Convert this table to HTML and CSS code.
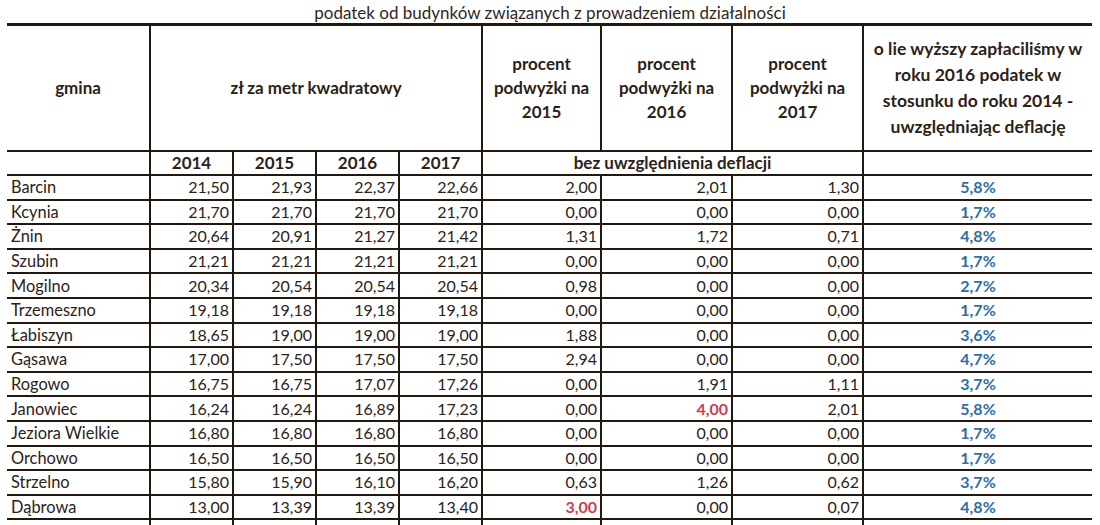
FILE: index.html
```html
<!DOCTYPE html>
<html lang="pl">
<head>
<meta charset="utf-8">
<title>podatek od budynków</title>
<link rel="stylesheet" href="styles.css">
</head>
<body>
<div class="title">podatek od budynków związanych z prowadzeniem działalności</div>
<table class="tax">
  <colgroup>
    <col class="c-name">
    <col class="c-year"><col class="c-year"><col class="c-year"><col class="c-year">
    <col class="c-p15"><col class="c-p"><col class="c-p">
    <col class="c-last">
  </colgroup>
  <thead>
    <tr class="h1">
      <th>gmina</th>
      <th colspan="4">zł za metr kwadratowy</th>
      <th class="pc">procent<br>podwyżki na<br>2015</th>
      <th class="pc">procent<br>podwyżki na<br>2016</th>
      <th class="pc">procent<br>podwyżki na<br>2017</th>
      <th class="lastc">o lie wyższy zapłaciliśmy w<br>roku 2016 podatek w<br>stosunku do roku 2014 -<br>uwzględniając deflację</th>
    </tr>
    <tr class="h2">
      <th></th>
      <th>2014</th><th>2015</th><th>2016</th><th>2017</th>
      <th colspan="3">bez uwzględnienia deflacji</th>
      <th></th>
    </tr>
  </thead>
  <tbody>
    <tr><td class="nm">Barcin</td><td>21,50</td><td>21,93</td><td>22,37</td><td>22,66</td><td>2,00</td><td>2,01</td><td>1,30</td><td class="pct">5,8%</td></tr>
    <tr><td class="nm">Kcynia</td><td>21,70</td><td>21,70</td><td>21,70</td><td>21,70</td><td>0,00</td><td>0,00</td><td>0,00</td><td class="pct">1,7%</td></tr>
    <tr><td class="nm">Żnin</td><td>20,64</td><td>20,91</td><td>21,27</td><td>21,42</td><td>1,31</td><td>1,72</td><td>0,71</td><td class="pct">4,8%</td></tr>
    <tr><td class="nm">Szubin</td><td>21,21</td><td>21,21</td><td>21,21</td><td>21,21</td><td>0,00</td><td>0,00</td><td>0,00</td><td class="pct">1,7%</td></tr>
    <tr><td class="nm">Mogilno</td><td>20,34</td><td>20,54</td><td>20,54</td><td>20,54</td><td>0,98</td><td>0,00</td><td>0,00</td><td class="pct">2,7%</td></tr>
    <tr><td class="nm">Trzemeszno</td><td>19,18</td><td>19,18</td><td>19,18</td><td>19,18</td><td>0,00</td><td>0,00</td><td>0,00</td><td class="pct">1,7%</td></tr>
    <tr><td class="nm">Łabiszyn</td><td>18,65</td><td>19,00</td><td>19,00</td><td>19,00</td><td>1,88</td><td>0,00</td><td>0,00</td><td class="pct">3,6%</td></tr>
    <tr><td class="nm">Gąsawa</td><td>17,00</td><td>17,50</td><td>17,50</td><td>17,50</td><td>2,94</td><td>0,00</td><td>0,00</td><td class="pct">4,7%</td></tr>
    <tr><td class="nm">Rogowo</td><td>16,75</td><td>16,75</td><td>17,07</td><td>17,26</td><td>0,00</td><td>1,91</td><td>1,11</td><td class="pct">3,7%</td></tr>
    <tr><td class="nm">Janowiec</td><td>16,24</td><td>16,24</td><td>16,89</td><td>17,23</td><td>0,00</td><td class="hot">4,00</td><td>2,01</td><td class="pct">5,8%</td></tr>
    <tr><td class="nm">Jeziora Wielkie</td><td>16,80</td><td>16,80</td><td>16,80</td><td>16,80</td><td>0,00</td><td>0,00</td><td>0,00</td><td class="pct">1,7%</td></tr>
    <tr><td class="nm">Orchowo</td><td>16,50</td><td>16,50</td><td>16,50</td><td>16,50</td><td>0,00</td><td>0,00</td><td>0,00</td><td class="pct">1,7%</td></tr>
    <tr><td class="nm">Strzelno</td><td>15,80</td><td>15,90</td><td>16,10</td><td>16,20</td><td>0,63</td><td>1,26</td><td>0,62</td><td class="pct">3,7%</td></tr>
    <tr><td class="nm">Dąbrowa</td><td>13,00</td><td>13,39</td><td>13,39</td><td>13,40</td><td class="hot">3,00</td><td>0,00</td><td>0,07</td><td class="pct">4,8%</td></tr>
    <tr><td class="nm"></td><td></td><td></td><td></td><td></td><td></td><td></td><td></td><td class="pct"></td></tr>
  </tbody>
</table>
</body>
</html>
```

FILE: styles.css
```css
html, body {
  margin: 0;
  padding: 0;
  background: #ffffff;
  overflow: hidden;
}

body {
  font-family: Lato, "Liberation Sans", sans-serif;
  color: #2b2218;
}

.title {
  height: 20px;
  padding-top: 3px;
  line-height: 20px;
  font-size: 17px;
  text-align: center;
  color: #2f271f;
}

.tax {
  margin-left: 7px;
  width: 1085px;
  table-layout: fixed;
  border-collapse: collapse;
  border-top: 3px solid #22180f;
}

.c-name { width: 143px; }
.c-year { width: 83px; }
.c-p15 { width: 119px; }
.c-p { width: 131px; }
.c-last { width: 229px; }

.tax th,
.tax td {
  border: 2px solid #22180f;
  padding: 0 3px;
  font-size: 16px;
  white-space: nowrap;
  overflow: hidden;
}

.tax tr > :first-child { border-left: none; }
.tax tr > :last-child { border-right: none; }

.tax th {
  font-weight: 700;
  font-size: 17px;
  text-align: center;
  vertical-align: middle;
}

.h1 th {
  height: 124px;
  line-height: 24px;
}

.h1 th.lastc {
  line-height: 26px;
  font-size: 17.5px;
}

.h2 th {
  height: 22px;
  line-height: 22px;
}

.tax td {
  height: 22.6px;
  line-height: 20px;
  text-align: right;
  vertical-align: middle;
}

.tax td.nm {
  text-align: left;
  padding-left: 4px;
  font-size: 16.4px;
}

.tax td.pct {
  text-align: center;
  font-weight: 700;
  color: #2e6ea4;
}

.tax td.hot {
  font-weight: 700;
  color: #cc3d4b;
}
```
